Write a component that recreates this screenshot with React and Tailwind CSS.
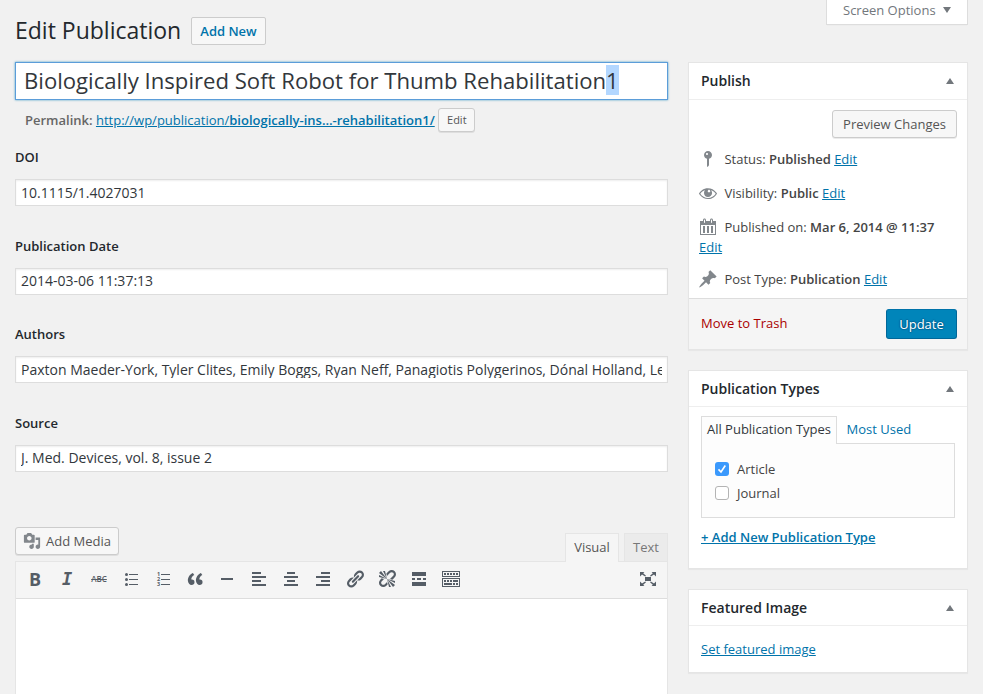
import React from "react";

function Icon({ children, className = "" }) {
  return (
    <svg viewBox="0 0 20 20" width="20" height="20" fill="currentColor" className={"block shrink-0 " + className}>
      {children}
    </svg>
  );
}

// Each row is [x, y, width, height] on the 20px icon grid.
function Bars({ rects }) {
  return (
    <Icon>
      {rects.map(([x, y, w, h], i) => (
        <rect key={i} x={x} y={y} width={w} height={h} shapeRendering="crispEdges" />
      ))}
    </Icon>
  );
}

const link = "text-[#0073aa] underline";
const button =
  "flex items-center justify-center rounded-[3px] border border-[#ccc] bg-[#f7f7f7] text-[#555] shadow-[0_1px_0_rgba(0,0,0,0.08)]";

function Field({ label, value, className, inputClass = "" }) {
  return (
    <div className={className}>
      <label className="block h-[20px] text-[13px] leading-[20px] font-semibold text-[#23282d]">{label}</label>
      <div
        className={
          "mt-[12px] flex h-[27px] items-center overflow-hidden border border-[#ddd] bg-white px-[5px] shadow-[inset_0_1px_2px_rgba(0,0,0,0.07)] " +
          inputClass
        }
      >
        <div className="w-full overflow-hidden text-[14px] leading-[17px] whitespace-nowrap text-[#32373c]">{value}</div>
      </div>
    </div>
  );
}

function Box({ title, className, headerClass = "h-[36px]", children }) {
  return (
    <section className={"flex flex-col border border-[#e5e5e5] bg-white shadow-[0_1px_1px_rgba(0,0,0,0.04)] " + className}>
      <header className={"flex shrink-0 items-start justify-between border-b border-[#eee] pt-[8px] pr-[13.5px] pl-[12px] " + headerClass}>
        <h2 className="text-[14px] leading-[20px] font-semibold text-[#23282d]">{title}</h2>
        <svg width="8" height="6" viewBox="0 0 8 6" className="mt-[7px] fill-[#72777c]">
          <path d="M4 0 8 6H0z" />
        </svg>
      </header>
      {children}
    </section>
  );
}

function Row({ icon, label, value, className = "" }) {
  return (
    <div className={"flex h-[20px] items-center pl-[9px] text-[13px] leading-[20px] text-[#444] " + className}>
      <span className="text-[#82878c]">{icon}</span>
      <span className="ml-[6.4px] whitespace-pre">
        {label} <b className="font-semibold">{value}</b>{" "}
      </span>
    </div>
  );
}

const mark = (
  <Icon>
    <path d="M14 6c0 1.86-1.28 3.41-3 3.86V16c0 1-2 2-2 2V9.86c-1.72-.45-3-2-3-3.86 0-2.21 1.79-4 4-4s4 1.79 4 4zM8 5c0 .55.45 1 1 1s1-.45 1-1-.45-1-1-1-1 .45-1 1z" />
  </Icon>
);
const eye = (
  <Icon>
    <path
      fillRule="evenodd"
      d="M18.3 9.5C15 4.9 8.5 3.8 3.9 7.2c-1.2.9-2.2 2.1-3 3.4.2.4.5.8.8 1.2 3.3 4.6 9.6 5.6 14.2 2.4.9-.7 1.7-1.4 2.4-2.4.3-.4.5-.8.8-1.2-.3-.4-.5-.8-.8-1.1zm-8.2-2.3c.5-.5 1.3-.5 1.8 0s.5 1.3 0 1.8-1.3.5-1.8 0-.5-1.3 0-1.8zm-.1 7.7c-3.1 0-6-1.6-7.7-4.2C3.5 9 5.1 7.8 7 7.2c-.7.8-1 1.7-1 2.7 0 2.2 1.7 4.1 4 4.1 2.2 0 4.1-1.7 4.1-4v-.1c0-1-.4-2-1.1-2.7 1.9.6 3.5 1.8 4.7 3.5-1.7 2.6-4.6 4.2-7.7 4.2z"
    />
  </Icon>
);
const calendar = (
  <Icon>
    <path d="M15 4h3v14H2V4h3V3c0-.83.67-1.5 1.5-1.5S8 2.17 8 3v1h4V3c0-.83.67-1.5 1.5-1.5S15 2.17 15 3v1zM6 3v2.5c0 .28.22.5.5.5s.5-.22.5-.5V3c0-.28-.22-.5-.5-.5S6 2.72 6 3zm7 0v2.5c0 .28.22.5.5.5s.5-.22.5-.5V3c0-.28-.22-.5-.5-.5s-.5.22-.5.5zm4 14V8H3v9h14zM7 16V9H5v7h2zm4 0V9H9v7h2zm4 0V9h-2v7h2z" />
  </Icon>
);
const pin = (
  <Icon>
    <path d="M10.44 3.02l1.82-1.82 6.36 6.35-1.83 1.82c-1.05-.68-2.48-.57-3.41.36l-.75.75c-.92.93-1.04 2.35-.35 3.41l-1.83 1.82-2.41-2.41-2.8 2.79c-.42.42-3.38 2.71-3.8 2.29s1.86-3.39 2.28-3.81l2.79-2.79L4.1 9.36l1.83-1.82c1.05.69 2.48.57 3.4-.36l.75-.75c.93-.92 1.05-2.35.36-3.41z" />
  </Icon>
);

const lines = [[8, 5, 9, 1], [8, 10, 9, 1], [8, 15, 9, 1]];

function Toolbar() {
  return (
    <div className="flex h-[37px] items-center justify-between border-b border-[#ddd] bg-[#f5f5f5] pr-[9px] pb-[2px] pl-[9px] text-[#555d66]">
      <div className="flex items-center gap-[12px]">
        <span className="w-[20px] text-center text-[18px] leading-[20px] font-bold">B</span>
        <span className="w-[20px] text-center font-['DejaVu_Sans_Mono',monospace] text-[17px] leading-[20px] font-bold italic">I</span>
        <span className="flex w-[20px] justify-center text-[8px] leading-[20px] font-semibold line-through">ABC</span>
        <Icon>
          <circle cx="5.5" cy="5.5" r="1.5" />
          <circle cx="5.5" cy="10.5" r="1.5" />
          <circle cx="5.5" cy="15.5" r="1.5" />
          {lines.map(([x, y, w, h]) => (
            <rect key={y} x={x} y={y} width={w} height={h} />
          ))}
        </Icon>
        <div className="flex items-center">
          <div className="flex w-[8px] flex-col pl-[4px] text-[5.5px] leading-[5px] font-bold">
            <span>1</span>
            <span>2</span>
            <span>3</span>
          </div>
          <svg width="12" height="20" viewBox="8 0 12 20" fill="currentColor" className="block">
            {lines.map(([x, y, w, h]) => (
              <rect key={y} x={x} y={y} width={w} height={h} />
            ))}
          </svg>
        </div>
        <Icon>
          <path d="M9.49 13.22c0-.74-.2-1.38-.61-1.9-.62-.78-1.83-.88-2.53-.72-.29-1.65 1.11-3.75 2.92-4.65L7.88 4c-2.73 1.3-5.42 4.28-4.96 8.05C3.21 14.43 4.59 16 6.54 16c.85 0 1.56-.25 2.12-.75s.83-1.18.83-2.03zm8.05 0c0-.74-.2-1.38-.61-1.9-.63-.78-1.83-.88-2.53-.72-.29-1.65 1.11-3.75 2.92-4.65L15.93 4c-2.73 1.3-5.41 4.28-4.95 8.05.29 2.38 1.66 3.95 3.61 3.95.85 0 1.56-.25 2.12-.75s.83-1.18.83-2.03z" />
        </Icon>
        <Bars rects={[[4, 9, 12, 2]]} />
        <Bars rects={[[3, 3, 9, 2], [3, 7, 14, 2], [3, 11, 9, 2], [3, 15, 14, 2]]} />
        <Bars rects={[[6, 3, 8, 2], [3, 7, 14, 2], [6, 11, 8, 2], [3, 15, 14, 2]]} />
        <Bars rects={[[8, 3, 9, 2], [3, 7, 14, 2], [8, 11, 9, 2], [3, 15, 14, 2]]} />
        <Icon>
          <path d="M17.74 2.76c1.68 1.69 1.68 4.41 0 6.1l-1.53 1.52c-1.12 1.12-2.7 1.47-4.14 1.09l2.62-2.61.76-.77.76-.76c.84-.84.84-2.2 0-3.04-.84-.85-2.2-.85-3.04 0l-.77.76-3.38 3.38c-.37-1.44-.02-3.02 1.1-4.14l1.52-1.53c1.69-1.68 4.42-1.68 6.1 0zM8.59 13.43l5.34-5.34c.42-.42.42-1.1 0-1.52-.44-.43-1.13-.39-1.53 0l-5.33 5.34c-.42.42-.42 1.1 0 1.52.44.43 1.13.39 1.52 0zm-.76 2.29l4.14-4.15c.38 1.44.03 3.02-1.09 4.14l-1.52 1.53c-1.69 1.68-4.41 1.68-6.1 0-1.68-1.68-1.68-4.42 0-6.1l1.53-1.52c1.12-1.12 2.7-1.47 4.14-1.1l-4.14 4.15c-.85.84-.85 2.2 0 3.05.84.84 2.2.84 3.04 0z" />
        </Icon>
        <Icon>
          <path d="M17.74 2.26c1.68 1.69 1.68 4.41 0 6.1l-1.53 1.52c-.32.33-.69.58-1.08.77L13 10l1.69-1.64.76-.77.76-.76c.84-.84.84-2.2 0-3.04-.84-.85-2.2-.85-3.04 0l-.77.76-.76.76L10 7l-.65-2.14c.19-.38.44-.75.77-1.07l1.52-1.53c1.69-1.68 4.42-1.68 6.1 0zM2 4l8 6-6-8zm4-2l4 8-2-8H6zM2 6l8 4-8-2V6zm7.36 7.69L10 13l.74 2.35-1.38 1.39c-1.69 1.68-4.41 1.68-6.1 0-1.68-1.68-1.68-4.42 0-6.1l1.39-1.38L7 10l-.69.64-1.52 1.53c-.85.84-.85 2.2 0 3.04.84.85 2.2.85 3.04 0zM18 16l-8-6 6 8zm-4 2l-4-8 2 8h2zm4-4l-8-4 8 2v2z" />
        </Icon>
        <Bars rects={[[3, 3, 14, 4], [3, 9, 3, 2], [8, 9, 4, 2], [14, 9, 3, 2], [3, 13, 14, 4]]} />
        <Bars
          rects={[
            [1, 2, 18, 1], [1, 7, 18, 1], [1, 2, 1, 6], [18, 2, 1, 6],
            [3, 4, 2, 2], [6, 4, 2, 2], [9, 4, 2, 2], [12, 4, 2, 2], [15, 4, 2, 2],
            [1, 9, 18, 1], [1, 17, 18, 1], [1, 9, 1, 9], [18, 9, 1, 9],
            [3, 11, 2, 2], [6, 11, 2, 2], [9, 11, 2, 2], [12, 11, 5, 2],
            [3, 14, 8, 2], [12, 14, 2, 2], [15, 14, 2, 2],
          ]}
        />
      </div>
      <Icon>
        <path d="M7 8h6v4H7zM2 3h4.4L5.2 4.2 8 6.8 7.2 7.6 4 5.4 2 7.4zM18 3h-4.4l1.2 1.2L12 6.8l.8.8L16 5.4l2 2zM2 17h4.4l-1.2-1.2L8 13.2l-.8-.8L4 14.6l-2-2zM18 17h-4.4l1.2-1.2-2.8-2.6.8-.8 3.2 2.2 2-2z" />
      </Icon>
    </div>
  );
}

export default function App() {
  return (
    <div className="flex h-[694px] w-[983px] gap-[20px] overflow-hidden bg-[#f1f1f1] pr-[15px] pl-[15px] font-['Open_Sans',sans-serif] text-[13px] leading-[20px] text-[#444]">
      <main className="flex w-[653px] shrink-0 flex-col">
        <div className="mt-[17px] flex h-[28px] items-center">
          <h1 className="w-[176px] pb-[2px] text-[23px] leading-[28px] whitespace-nowrap text-[#23282d]">Edit Publication</h1>
          <a className="flex h-[28px] w-[75px] items-center justify-center rounded-[2px] border border-[#ccc] bg-[#f7f7f7] font-semibold text-[#0073aa]">
            Add New
          </a>
        </div>

        <div className="mt-[17px] flex h-[38px] items-center border border-[#5b9dd9] bg-white pb-[2px] pl-[8px] text-[22.13px] leading-[30px] whitespace-nowrap text-[#32373c] shadow-[0_0_2px_rgba(30,140,190,0.8)]">
          <span>Biologically Inspired Soft Robot for Thumb Rehabilitation</span>
          <span className="bg-[#b3d7ff]">1</span>
        </div>

        <div className="mt-[8px] flex h-[24px] items-center pl-[10px] whitespace-nowrap">
          <b className="mr-[3.4px] font-semibold text-[#666]">Permalink:</b>
          <a className={link}>
            http://wp/publication/<b className="font-semibold">biologically-ins…-rehabilitation1/</b>
          </a>
          <span className={button + " ml-[3.6px] h-[24px] w-[37px] text-[11px]"}>Edit</span>
        </div>

        <Field label="DOI" value="10.1115/1.4027031" className="mt-[15px]" />
        <Field label="Publication Date" value="2014-03-06 11:37:13" className="mt-[30px]" inputClass="pb-[2px]" />
        <Field
          label="Authors"
          value="Paxton Maeder-York, Tyler Clites, Emily Boggs, Ryan Neff, Panagiotis Polygerinos, Dónal Holland, Leia Stirling, Kevin Galloway"
          className="mt-[29px]"
        />
        <Field label="Source" value="J. Med. Devices, vol. 8, issue 2" className="mt-[30px]" inputClass="pb-[2px]" />

        <div className="mt-[55px] flex h-[34px] items-start justify-between">
          <span className={button + " h-[28px] w-[104px] gap-[5px]"}>
            <Icon className="h-[18px] w-[18px] text-[#82878c]">
              <path d="M13 11V4c0-.55-.45-1-1-1h-1.67L9 1H5L3.67 3H2c-.55 0-1 .45-1 1v7c0 .55.45 1 1 1h10c.55 0 1-.45 1-1zM7 4.5c1.38 0 2.5 1.12 2.5 2.5S8.38 9.5 7 9.5 4.5 8.38 4.5 7 5.62 4.5 7 4.5zM14 6h5v10.5c0 1.38-1.12 2.5-2.5 2.5S14 17.88 14 16.5s1.12-2.5 2.5-2.5c.17 0 .34.02.5.05V9h-3V6zm-4 8.05V13h2v3.5c0 1.38-1.12 2.5-2.5 2.5S7 17.88 7 16.5 8.12 14 9.5 14c.17 0 .34.02.5.05z" />
            </Icon>
            Add Media
          </span>
          <div className="mt-[6px] flex gap-[5px]">
            <span className="z-10 flex h-[29px] w-[54px] items-center justify-center border border-b-0 border-[#e5e5e5] bg-[#f5f5f5] pb-[2px] text-[#555]">
              Visual
            </span>
            <span className="flex h-[28px] w-[44px] items-center justify-center border border-b-0 border-[#e5e5e5] bg-[#ebebeb] pb-px text-[#777]">
              Text
            </span>
          </div>
        </div>
        <div className="grow border border-b-0 border-[#e5e5e5] bg-white">
          <Toolbar />
        </div>
      </main>

      <aside className="flex w-[280px] shrink-0 flex-col">
        <div className="flex h-[25px] w-[142px] items-center gap-[7px] self-end border border-t-0 border-[#ddd] bg-white pb-[5px] pl-[16px] text-[#72777c] shadow-[0_1px_1px_-1px_rgba(0,0,0,0.1)]">
          Screen Options
          <svg width="8" height="6" viewBox="0 0 8 6" className="fill-[#72777c]">
            <path d="M0 0h8L4 6z" />
          </svg>
        </div>

        <Box title="Publish" className="mt-[37px] h-[288px]" headerClass="h-[37px]">
          <span className={button + " mt-[10px] mr-[10px] h-[28px] w-[125px] self-end"}>Preview Changes</span>
          <div className="mt-[11px] flex">
            <Row icon={mark} label="Status:" value="Published" />
            <a className={link}>Edit</a>
          </div>
          <div className="mt-[14px] flex">
            <Row icon={eye} label="Visibility:" value="Public" />
            <a className={link}>Edit</a>
          </div>
          <Row icon={calendar} label="Published on:" value="Mar 6, 2014 @ 11:37" className="mt-[14px]" />
          <div className="pl-[10px]">
            <a className={link}>Edit</a>
          </div>
          <div className="mt-[12px] flex">
            <Row icon={pin} label="Post Type:" value="Publication" />
            <a className={link}>Edit</a>
          </div>
          <footer className="mt-auto flex h-[51px] items-center justify-between border-t border-[#ddd] bg-[#f5f5f5] pr-[10px] pl-[12px]">
            <a className="pb-[2px] text-[#a00]">Move to Trash</a>
            <span className="flex h-[30px] w-[71px] items-center justify-center rounded-[3px] border border-[#006799] border-t-[#0073aa] bg-[#0085ba] text-white [text-shadow:0_-1px_1px_#006799,1px_0_1px_#006799,0_1px_1px_#006799,-1px_0_1px_#006799]">
              Update
            </span>
          </footer>
        </Box>

        <Box title="Publication Types" className="mt-[20px] h-[199px]">
          <div className="mt-[9px] ml-[12px] flex h-[28px]">
            <span className="z-10 flex h-[28px] w-[136px] justify-center border border-b-0 border-[#ddd] bg-[#fdfdfd] pt-[2px] whitespace-nowrap text-[#32373c]">
              All Publication Types
            </span>
            <span className="ml-[9.5px] pt-[3px] text-[#0073aa]">Most Used</span>
          </div>
          <div className="-mt-px ml-[12px] flex h-[75px] w-[254px] flex-col gap-[4px] border border-[#ddd] bg-[#fdfdfd] pt-[15px] pl-[13px]">
            <label className="flex items-center gap-[8px]">
              <span className="flex h-[14px] w-[14px] items-center justify-center rounded-[3px] bg-[#3b99fc]">
                <svg width="10" height="10" viewBox="0 0 10 10" fill="none" stroke="#fff" strokeWidth="1.6">
                  <path d="M1.5 5.4 4 8 8.3 1.5" />
                </svg>
              </span>
              Article
            </label>
            <label className="flex items-center gap-[8px]">
              <span className="h-[14px] w-[14px] rounded-[3px] border border-[#b4b4b4] bg-white" />
              Journal
            </label>
          </div>
          <a className={link + " mt-[9px] ml-[12px] font-semibold"}>+ Add New Publication Type</a>
        </Box>

        <Box title="Featured Image" className="mt-[20px] h-[84px]">
          <a className={link + " mt-[13px] ml-[12px]"}>Set featured image</a>
        </Box>
      </aside>
    </div>
  );
}
